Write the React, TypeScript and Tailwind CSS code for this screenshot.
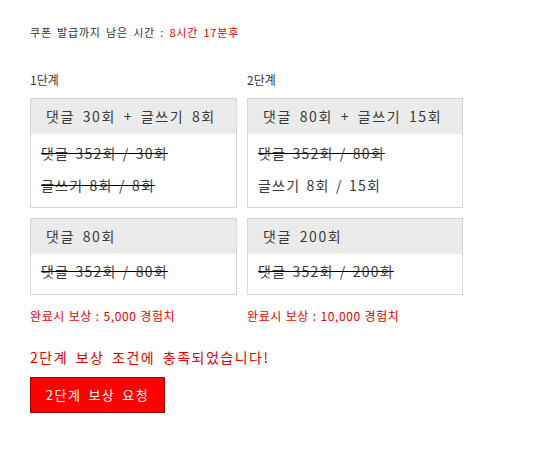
import React from "react";

const font = { fontFamily: '"Noto Sans CJK KR", "Noto Sans", sans-serif' };

interface Row {
  text: string;
  done: boolean;
}

const StageBox: React.FC<{ title: string; rows: Row[]; w: string }> = ({ title, rows, w }) => (
  <div className={`border border-[#d6d6d6] ${w}`}>
    <div className="h-[35px] bg-[#ebebeb] pl-[15px] flex items-center text-[14px] text-[#3a3a3a] tracking-[1.6px] [word-spacing:3px]">
      {title}
    </div>
    <div className={`px-[10px] ${rows.length > 1 ? "pt-[4px] pb-[5px]" : "pt-[2px] pb-[6px]"}`}>
      {rows.map((r, i) => (
        <div
          key={i}
          className={`h-[32px] flex items-center text-[14px] text-[#3a3a3a] tracking-[1.2px] [word-spacing:2px] ${
            r.done ? "line-through decoration-black" : ""
          }`}
        >
          {r.text}
        </div>
      ))}
    </div>
  </div>
);

export default function App() {
  return (
    <div className="min-h-screen bg-white pl-[30px] pt-[24px]" style={font}>
      <div className="text-[11px] text-[#333] tracking-[0.8px] [word-spacing:2px]">
        쿠폰 발급까지 남은 시간 : <span className="text-[#e00000]">8시간 17분후</span>
      </div>

      <div className="flex gap-[10px] mt-[30px]">
        {/* 1단계 */}
        <div className="w-[207px]">
          <div className="text-[12px] text-[#333] h-[18px]">1단계</div>
          <div className="mt-[9px]">
            <StageBox
              w="w-[207px]"
              title="댓글 30회 + 글쓰기 8회"
              rows={[
                { text: "댓글 352회 / 30회", done: true },
                { text: "글쓰기 8회 / 8회", done: true },
              ]}
            />
          </div>
          <div className="mt-[10px]">
            <StageBox w="w-[207px]" title="댓글 80회" rows={[{ text: "댓글 352회 / 80회", done: true }]} />
          </div>
          <div className="mt-[12px] text-[12px] text-[#e00000] tracking-[0.6px] [word-spacing:0.5px]">
            완료시 보상 : 5,000 경험치
          </div>
        </div>

        {/* 2단계 */}
        <div className="w-[216px]">
          <div className="text-[12px] text-[#333] h-[18px]">2단계</div>
          <div className="mt-[9px]">
            <StageBox
              w="w-[216px]"
              title="댓글 80회 + 글쓰기 15회"
              rows={[
                { text: "댓글 352회 / 80회", done: true },
                { text: "글쓰기 8회 / 15회", done: false },
              ]}
            />
          </div>
          <div className="mt-[10px]">
            <StageBox w="w-[216px]" title="댓글 200회" rows={[{ text: "댓글 352회 / 200회", done: true }]} />
          </div>
          <div className="mt-[12px] text-[12px] text-[#e00000] tracking-[0.6px] [word-spacing:0.5px]">
            완료시 보상 : 10,000 경험치
          </div>
        </div>
      </div>

      <div className="mt-[22px] text-[14px] text-[#e00000] tracking-[1.5px] [word-spacing:3px]">
        2단계 보상 조건에 충족되었습니다!
      </div>
      <button className="mt-[9px] w-[135px] h-[36px] bg-[#ff0000] border border-[#a00000] text-white text-[13px] tracking-[1.5px] [word-spacing:2.5px]">
        2단계 보상 요청
      </button>
    </div>
  );
}
